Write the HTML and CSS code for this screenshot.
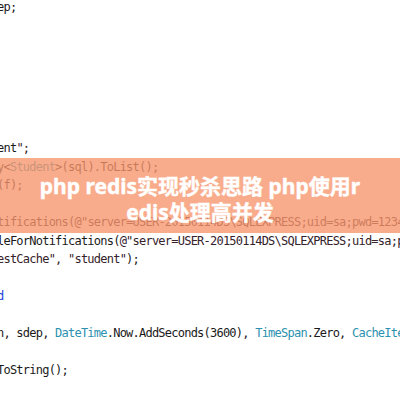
FILE: index.html
```html
<!DOCTYPE html>
<html lang="zh">
<head>
<meta charset="utf-8">
<title>php redis实现秒杀思路 php使用redis处理高并发</title>
<link rel="stylesheet" href="styles.css">
</head>
<body>
<div class="page">
  <div class="code">
    <div class="line first">ep;</div>
    <div class="block">
      <div class="line">ent<span class="str">";</span></div>
      <div class="line">y&lt;<span class="type">Student</span>&gt;(sql).ToList();</div>
      <div class="line">(f);</div>
      <div class="line"> </div>
      <div class="line">tifications(<span class="str">@"server=USER-20150114DS\SQLEXPRESS;uid=sa;pwd=123456"</span>);</div>
      <div class="line">leForNotifications(<span class="str">@"server=USER-20150114DS\SQLEXPRESS;uid=sa;pwd=123456"</span>);</div>
      <div class="line"><span class="str">estCache", "student"</span>);</div>
      <div class="line"> </div>
      <div class="line"><span class="kw">d</span></div>
      <div class="line"> </div>
      <div class="line">n, sdep, <span class="type">DateTime</span>.Now.AddSeconds(3600), <span class="type">TimeSpan</span>.Zero, <span class="type">CacheItemPriority</span>.Normal, null);</div>
      <div class="line"> </div>
      <div class="line">ToString();</div>
    </div>
  </div>
  <div class="band">
    <h1 class="title">php redis实现秒杀思路 php使用redis处理高并发</h1>
  </div>
</div>
</body>
</html>
```
FILE: styles.css
```css
html, body {
  margin: 0;
  padding: 0;
  background: #ffffff;
}
body {
  width: 400px;
  height: 400px;
  overflow: hidden;
}
.page {
  position: relative;
  width: 400px;
  height: 400px;
  overflow: hidden;
}
.code {
  margin-left: -3px;
  font-family: "DejaVu Sans Mono", "Liberation Mono", monospace;
  font-size: 12px;
  letter-spacing: -0.77px;
  color: #1a1a1a;
}
.line {
  height: 18.5px;
  line-height: 18.5px;
  white-space: pre;
}
.line.first {
  height: 14px;
  line-height: 14px;
}
.block {
  margin-top: 125px;
}
.str {
  color: #35222a;
}
.type {
  color: #2b91af;
}
.kw {
  color: #1a3fd8;
}
.band {
  position: absolute;
  left: 0;
  right: 0;
  top: 158px;
  height: 75px;
  box-sizing: border-box;
  padding: 15px 37px 8px;
  background: rgba(247, 149, 108, 0.78);
}
.title {
  margin: 0;
  font-family: "Noto Sans", "Noto Sans CJK SC", sans-serif;
  font-weight: 700;
  font-size: 21px;
  line-height: 26px;
  color: #ffffff;
  -webkit-text-stroke: 0.4px #ffffff;
  text-align: center;
  word-break: break-all;
}
```
